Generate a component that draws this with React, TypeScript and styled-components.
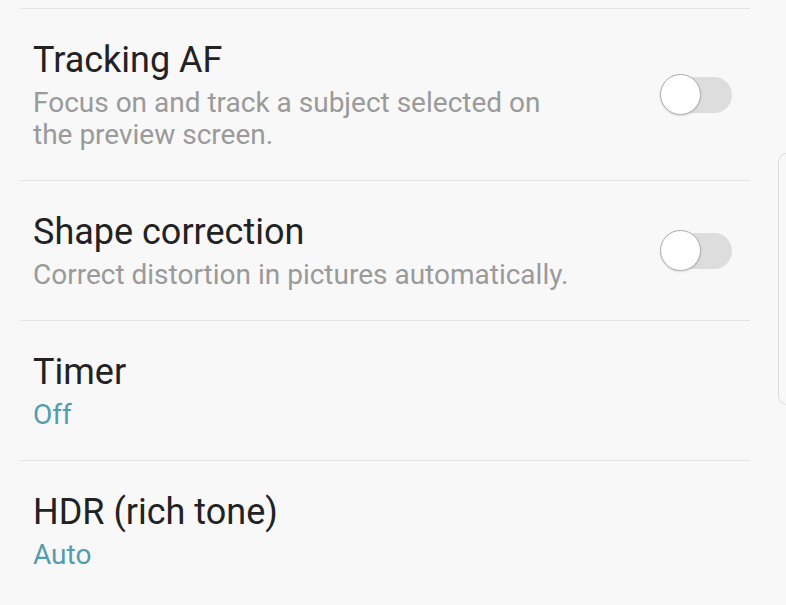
import React from "react";
import styled, { createGlobalStyle } from "styled-components";

const GlobalStyle = createGlobalStyle`
  html, body {
    margin: 0;
    padding: 0;
    background: #f8f8f8;
  }
  body {
    font-family: Roboto, "Noto Sans", "Liberation Sans", sans-serif;
    width: 786px;
    height: 605px;
    overflow: hidden;
  }
`;

const Screen = styled.div`
  position: relative;
  width: 786px;
  height: 605px;
  background: #f8f8f8;
  padding-top: 8px;
  box-sizing: border-box;
`;

const List = styled.div`
  display: flex;
  flex-direction: column;
  margin: 0 36px 0 20px;
`;

const Row = styled.div`
  display: flex;
  align-items: center;
  border-top: 1px solid #e3e3e3;
  padding: 30px 18px 29px 13px;
`;

const TextBlock = styled.div`
  flex: 1;
  display: flex;
  flex-direction: column;
  gap: 6px;
`;

const Title = styled.div`
  font-size: 36px;
  line-height: 42px;
  color: #222222;
`;

const Sub = styled.div<{ $accent?: boolean }>`
  font-size: 28px;
  line-height: 32px;
  color: ${(p) => (p.$accent ? "#559dad" : "#9a9a9a")};
  max-width: 546px;
`;

const Toggle = styled.div`
  position: relative;
  width: 72px;
  height: 42px;
  flex-shrink: 0;
  display: flex;
  align-items: center;
`;

const Track = styled.div`
  margin-left: 4px;
  width: 68px;
  height: 36px;
  border-radius: 18px;
  background: #dddddd;
`;

const Knob = styled.div`
  position: absolute;
  left: 0;
  top: 0;
  width: 39px;
  height: 39px;
  border-radius: 50%;
  background: #ffffff;
  border: 1.5px solid #ababab;
  box-shadow: 0 1px 2px rgba(0, 0, 0, 0.12);
`;

const ScrollEdge = styled.div`
  position: absolute;
  left: 778px;
  top: 153px;
  width: 20px;
  height: 250px;
  border: 1px solid #dddddd;
  border-right: none;
  border-radius: 9px 0 0 9px;
`;

type Item = { title: string; sub: string; accent?: boolean; toggle?: boolean };

const items: Item[] = [
  {
    title: "Tracking AF",
    sub: "Focus on and track a subject selected on the preview screen.",
    toggle: true,
  },
  {
    title: "Shape correction",
    sub: "Correct distortion in pictures automatically.",
    toggle: true,
  },
  { title: "Timer", sub: "Off", accent: true },
  { title: "HDR (rich tone)", sub: "Auto", accent: true },
];

export default function App() {
  return (
    <>
      <GlobalStyle />
      <Screen>
        <List>
          {items.map((it) => (
            <Row key={it.title}>
              <TextBlock>
                <Title>{it.title}</Title>
                <Sub $accent={it.accent}>{it.sub}</Sub>
              </TextBlock>
              {it.toggle && (
                <Toggle>
                  <Track />
                  <Knob />
                </Toggle>
              )}
            </Row>
          ))}
        </List>
        <ScrollEdge />
      </Screen>
    </>
  );
}
